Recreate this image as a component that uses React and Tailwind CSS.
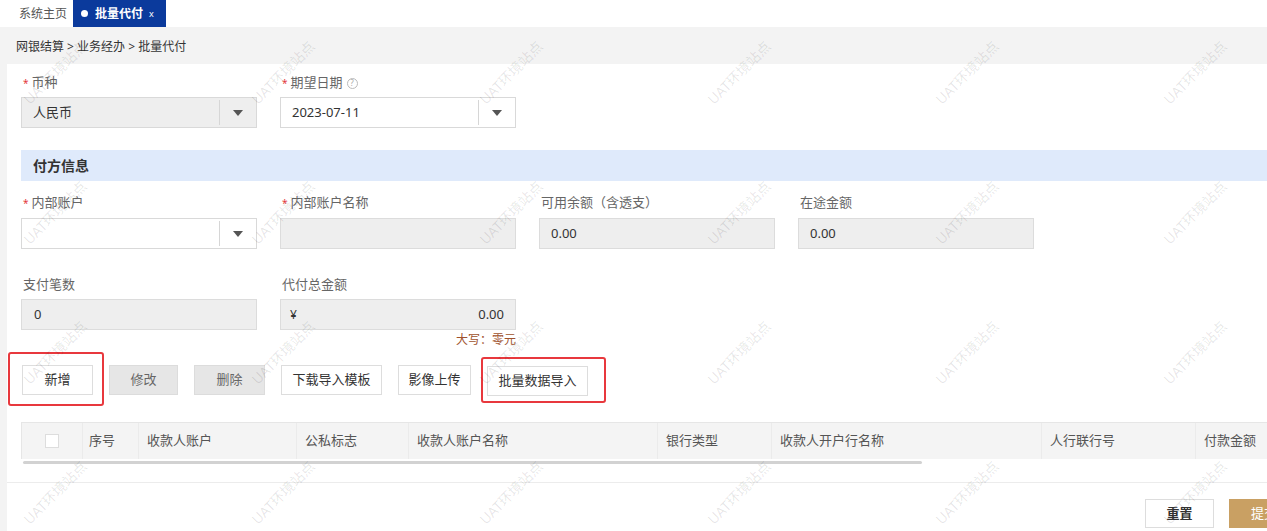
import React from "react";

function Caret() {
  return (
    <span className="block w-0 h-0 border-l-[5px] border-r-[5px] border-t-[6px] border-l-transparent border-r-transparent border-t-[#555]" />
  );
}

function Label({ req, children, help }) {
  return (
    <div className="h-[20px] flex items-center text-[13px] text-[#666] pl-[2px]">
      {req && <span className="text-[#e4393c] text-[10px] mr-[3px] leading-none">*</span>}
      <span>{children}</span>
      {help && (
        <span className="ml-[4px] w-[11px] h-[11px] rounded-full border border-[#bbb] text-[#aaa] text-[8px] leading-none flex items-center justify-center">
          ?
        </span>
      )}
    </div>
  );
}

function SelectBox({ value, gray }) {
  return (
    <div
      className={`h-[31px] border border-[#d9d9d9] flex items-center ${gray ? "bg-[#eeeeee]" : "bg-white"}`}
    >
      <div className="flex-1 pl-[11px] text-[13px] text-[#333]">{value}</div>
      <div className="w-[37px] h-[25px] border-l border-[#d6d6d6] flex items-center justify-center">
        <Caret />
      </div>
    </div>
  );
}

function ReadBox({ children, className = "" }) {
  return (
    <div className={`h-[31px] border border-[#dcdcdc] bg-[#eeeeee] flex items-center text-[13px] text-[#333] ${className}`}>
      {children}
    </div>
  );
}

function Field({ label, req, help, children, w = "w-[236px]" }) {
  return (
    <div className={`${w} flex flex-col`}>
      <Label req={req} help={help}>
        {label}
      </Label>
      {children}
    </div>
  );
}

const cols = [
  { t: "", w: "w-[60px]" },
  { t: "序号", w: "w-[56px]", pl: "pl-[6px]" },
  { t: "收款人账户", w: "w-[158px]" },
  { t: "公私标志", w: "w-[112px]" },
  { t: "收款人账户名称", w: "w-[249px]" },
  { t: "银行类型", w: "w-[114px]" },
  { t: "收款人开户行名称", w: "w-[270px]" },
  { t: "人行联行号", w: "w-[154px]" },
  { t: "付款金额", w: "w-[140px]" },
];

export default function App() {
  const marks = Array.from({ length: 28 });
  return (
    <div className="relative w-[1267px] h-[531px] overflow-hidden bg-[#f3f3f3] font-['Noto_Sans','Noto_Sans_CJK_SC',sans-serif]">
      {/* tab bar */}
      <div className="h-[27px] bg-white flex items-stretch">
        <div className="w-[73px] flex items-center pl-[19px] text-[12px] text-[#555]">系统主页</div>
        <div className="w-[93px] bg-[#0b3a9c] flex items-center pl-[8px] text-white">
          <span className="w-[7px] h-[7px] rounded-full bg-white" />
          <span className="ml-[7px] text-[12px] font-bold">批量代付</span>
          <span className="ml-[6px] text-[9px] leading-none">x</span>
        </div>
      </div>

      {/* breadcrumb */}
      <div className="h-[37px] flex items-center pl-[16px] pt-[2px] text-[12px] text-[#333]">
        网银结算 &gt; 业务经办 &gt; 批量代付
      </div>

      {/* panel */}
      <div className="ml-[7px] w-[1320px] h-[467px] bg-white">
        <div className="pl-[14px] pt-[9px]">
          <div className="flex gap-[23px]">
            <Field label="币种" req>
              <div className="mt-[4px]">
                <SelectBox value="人民币" gray />
              </div>
            </Field>
            <Field label="期望日期" req help>
              <div className="mt-[4px]">
                <SelectBox value="2023-07-11" />
              </div>
            </Field>
          </div>

          <div className="mt-[22px] h-[31px] bg-[#dfeafb] flex items-center pl-[12px] text-[14px] font-bold text-[#333]">
            付方信息
          </div>

          <div className="mt-[12px] flex gap-[23px]">
            <Field label="内部账户" req>
              <div className="mt-[5px]">
                <SelectBox value="" />
              </div>
            </Field>
            <Field label="内部账户名称" req>
              <div className="mt-[5px]">
                <ReadBox />
              </div>
            </Field>
            <Field label="可用余额（含透支）">
              <div className="mt-[5px]">
                <ReadBox className="pl-[11px]">0.00</ReadBox>
              </div>
            </Field>
            <Field label="在途金额">
              <div className="mt-[5px]">
                <ReadBox className="pl-[11px]">0.00</ReadBox>
              </div>
            </Field>
          </div>

          <div className="mt-[26px] flex gap-[23px]">
            <Field label="支付笔数">
              <div className="mt-[4px]">
                <ReadBox className="pl-[12px]">0</ReadBox>
              </div>
            </Field>
            <Field label="代付总金额">
              <div className="mt-[4px]">
                <ReadBox className="pl-[9px] pr-[11px] justify-between">
                  <span className="text-[12px]">¥</span>
                  <span>0.00</span>
                </ReadBox>
              </div>
              <div className="mt-[3px] text-right text-[12px] leading-[14px] text-[#a0522d]">大写：零元</div>
            </Field>
          </div>

          {/* action buttons */}
          <div className="relative mt-[18px] flex gap-[16px] pl-[1px]">
            <button className="w-[71px] h-[30px] border border-[#dddddd] bg-white text-[13px] text-[#333]">新增</button>
            <button className="w-[69px] h-[30px] border border-[#dcdcdc] bg-[#e6e6e6] text-[13px] text-[#666]">修改</button>
            <button className="w-[71px] h-[30px] border border-[#dcdcdc] bg-[#e6e6e6] text-[13px] text-[#666]">删除</button>
            <button className="w-[101px] h-[30px] border border-[#dddddd] bg-white text-[13px] text-[#333]">下载导入模板</button>
            <button className="w-[73px] h-[30px] border border-[#dddddd] bg-white text-[13px] text-[#333]">影像上传</button>
            <button className="w-[101px] h-[30px] mt-[1px] border border-[#dddddd] bg-white text-[13px] text-[#333]">批量数据导入</button>
            <div className="absolute left-[-13px] top-[-13px] w-[96px] h-[54px] border-2 border-[#e8383d] rounded-[3px] pointer-events-none" />
            <div className="absolute left-[460px] top-[-8px] w-[125px] h-[46px] border-2 border-[#e8383d] rounded-[3px] pointer-events-none" />
          </div>

          {/* table header */}
          <div className="mt-[26px] h-[37px] flex bg-[#f4f4f4] border-t border-l border-[#e6e6e6]">
            {cols.map((c, i) => (
              <div
                key={i}
                className={`${c.w} shrink-0 flex items-center ${i === 0 ? "justify-center" : `border-l border-[#ebebeb] ${c.pl || "pl-[8px]"}`} text-[13px] text-[#555]`}
              >
                {i === 0 ? <span className="w-[14px] h-[14px] bg-white border border-[#dddddd]" /> : c.t}
              </div>
            ))}
          </div>
          <div className="mt-[2px] ml-[2px] w-[899px] h-[3px] rounded bg-[#d2d2d2]" />
        </div>

        <div className="mt-[18px] border-t border-[#ececec]" />

        <div className="pt-[16px] flex justify-end gap-[15px] pr-[28px]">
          <button className="w-[69px] h-[29px] border border-[#dddddd] bg-white text-[13px] font-bold text-[#333]">重置</button>
          <button className="w-[70px] h-[29px] bg-[#c9a063] text-[13px] text-white">提交</button>
        </div>
      </div>

      {/* watermark overlay */}
      <div className="absolute inset-0 pointer-events-none overflow-hidden">
        <div className="absolute left-[-59px] top-[2px] grid grid-cols-[repeat(7,228px)] grid-rows-[repeat(4,140px)]">
          {marks.map((_, i) => (
            <div key={i} className="flex items-center justify-center">
              <span className="-rotate-45 whitespace-nowrap text-[14px] text-black/10">UAT环境站点</span>
            </div>
          ))}
        </div>
      </div>
    </div>
  );
}
